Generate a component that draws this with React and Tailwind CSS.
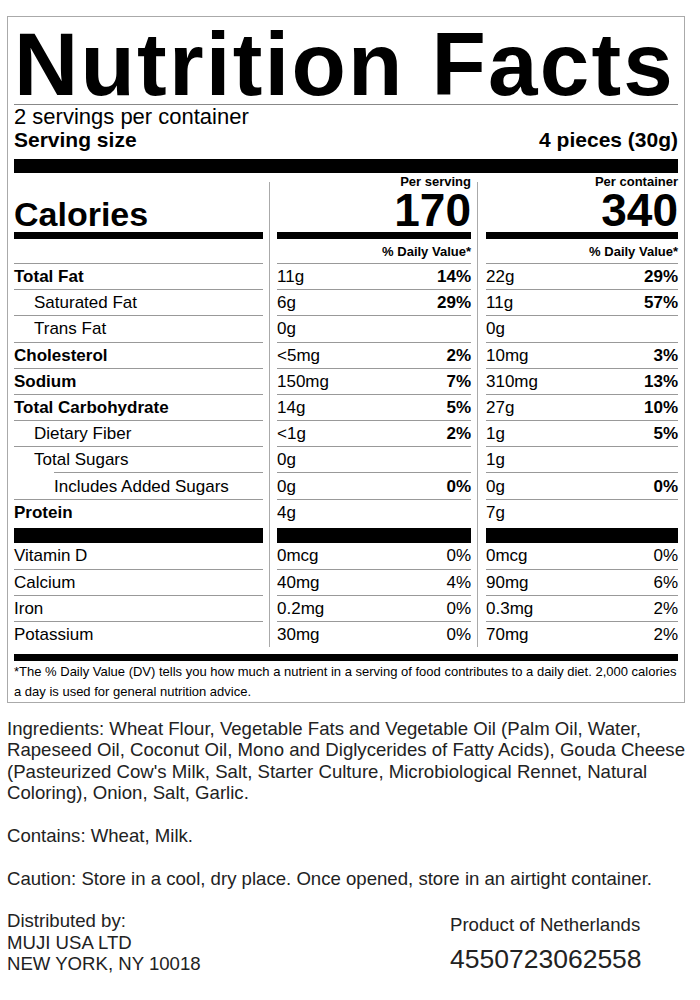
import React from 'react';

const nutrients = [
    { label: 'Total Fat', level: 0, a: '11g', ap: '14%', b: '22g', bp: '29%' },
    { label: 'Saturated Fat', level: 1, a: '6g', ap: '29%', b: '11g', bp: '57%' },
    { label: 'Trans Fat', level: 1, a: '0g', b: '0g' },
    { label: 'Cholesterol', level: 0, a: '<5mg', ap: '2%', b: '10mg', bp: '3%' },
    { label: 'Sodium', level: 0, a: '150mg', ap: '7%', b: '310mg', bp: '13%' },
    { label: 'Total Carbohydrate', level: 0, a: '14g', ap: '5%', b: '27g', bp: '10%' },
    { label: 'Dietary Fiber', level: 1, a: '<1g', ap: '2%', b: '1g', bp: '5%' },
    { label: 'Total Sugars', level: 1, a: '0g', b: '1g' },
    { label: 'Includes Added Sugars', level: 2, a: '0g', ap: '0%', b: '0g', bp: '0%' },
    { label: 'Protein', level: 0, a: '4g', b: '7g' },
];

const vitamins = [
    { label: 'Vitamin D', a: '0mcg', ap: '0%', b: '0mcg', bp: '0%' },
    { label: 'Calcium', a: '40mg', ap: '4%', b: '90mg', bp: '6%' },
    { label: 'Iron', a: '0.2mg', ap: '0%', b: '0.3mg', bp: '2%' },
    { label: 'Potassium', a: '30mg', ap: '0%', b: '70mg', bp: '2%' },
];

const rowBase = 'h-[26.2px] flex items-center justify-between text-[17px] leading-[17px]';

const LabelColumn = () => (
    <div className="w-[249px] flex flex-col">
        <div className="h-[58.7px] flex items-end">
            <span className="text-[34px] leading-[35px] font-bold">Calories</span>
        </div>
        <div className="h-[7px] bg-black" />
        <div className="h-[24.3px]" />
        {nutrients.map((n, i) => (
            <div
                key={i}
                className={`${rowBase} border-t border-[#999] ${n.level === 2 ? 'ml-[40px]' : ''} ${n.level === 1 ? 'pl-[20px]' : ''} ${n.level === 0 ? 'font-bold' : ''}`}
            >
                <span>{n.label}</span>
            </div>
        ))}
        <div className="h-[15px] mt-[2.7px] bg-black" />
        {vitamins.map((v, i) => (
            <div key={i} className={`${rowBase} ${i > 0 ? 'border-t border-[#999]' : ''}`}>
                <span>{v.label}</span>
            </div>
        ))}
    </div>
);

const ValueColumn = ({ title, calories, which, width }) => (
    <div className={`${width} flex flex-col`}>
        <div className="h-[58.7px] flex flex-col items-end pt-[2px]">
            <span className="text-[13px] leading-[13px] font-bold">{title}</span>
            <span className="text-[46px] leading-[44px] font-bold">{calories}</span>
        </div>
        <div className="h-[7px] bg-black" />
        <div className="h-[24.3px] flex justify-end pt-[1.5px]">
            <span className="text-[13px] leading-[24px] font-bold">% Daily Value*</span>
        </div>
        {nutrients.map((n, i) => (
            <div key={i} className={`${rowBase} border-t border-[#999]`}>
                <span>{which === 'a' ? n.a : n.b}</span>
                <span className="font-bold">{which === 'a' ? n.ap : n.bp}</span>
            </div>
        ))}
        <div className="h-[15px] mt-[2.7px] bg-black" />
        {vitamins.map((v, i) => (
            <div key={i} className={`${rowBase} ${i > 0 ? 'border-t border-[#999]' : ''}`}>
                <span>{which === 'a' ? v.a : v.b}</span>
                <span>{which === 'a' ? v.ap : v.bp}</span>
            </div>
        ))}
    </div>
);

export default function App() {
    return (
        <div className="w-[700px] h-[1000px] bg-white overflow-hidden text-black" style={{ fontFamily: '"Liberation Sans", Arial, sans-serif' }}>
            <div className="ml-[7px] mt-[16px] w-[678px] border border-[#aaa] px-[6px]">
                <div className="pt-[7px] border-b border-[#888]">
                    <h1 className="text-[89px] leading-[80px] font-bold tracking-[2.2px] whitespace-nowrap">Nutrition Facts</h1>
                </div>
                <div className="text-[22px] leading-[23px]">2 servings per container</div>
                <div className="flex justify-between text-[21px] leading-[23px] font-bold">
                    <span>Serving size</span>
                    <span>4 pieces (30g)</span>
                </div>
                <div className="h-[14px] mt-[8px] bg-black" />

                <div className="flex">
                    <LabelColumn />
                    <div className="w-px ml-[6px] mr-[7px] mt-[9px] bg-[#aaa]" />
                    <ValueColumn title="Per serving" calories="170" which="a" width="w-[194px]" />
                    <div className="w-px ml-[6px] mr-[8px] mt-[9px] bg-[#aaa]" />
                    <ValueColumn title="Per container" calories="340" which="b" width="w-[192px]" />
                </div>

                <div className="h-[7px] mt-[6.5px] bg-black" />
                <p className="pt-[1px] text-[13px] leading-[20px] whitespace-nowrap">
                    *The % Daily Value (DV) tells you how much a nutrient in a serving of food contributes to a daily diet. 2,000 calories
                    <br />
                    a day is used for general nutrition advice.
                </p>
            </div>

            <div className="mt-[15px] pl-[7px] text-[18.6px] leading-[21.4px] text-[#222] whitespace-nowrap">
                <p>
                    Ingredients: Wheat Flour, Vegetable Fats and Vegetable Oil (Palm Oil, Water,
                    <br />
                    Rapeseed Oil, Coconut Oil, Mono and Diglycerides of Fatty Acids), Gouda Cheese
                    <br />
                    (Pasteurized Cow's Milk, Salt, Starter Culture, Microbiological Rennet, Natural
                    <br />
                    Coloring), Onion, Salt, Garlic.
                </p>
                <p className="mt-[21.4px]">Contains: Wheat, Milk.</p>
                <p className="mt-[21.4px]">Caution: Store in a cool, dry place. Once opened, store in an airtight container.</p>
                <div className="mt-[21.4px] flex">
                    <div className="w-[443px]">
                        <p>Distributed by:</p>
                        <p>MUJI USA LTD</p>
                        <p>NEW YORK, NY 10018</p>
                    </div>
                    <div className="pt-[3.4px]">
                        <p>Product of Netherlands</p>
                        <p className="mt-[8.6px] text-[26.5px] leading-[30px]">4550723062558</p>
                    </div>
                </div>
            </div>
        </div>
    );
}
